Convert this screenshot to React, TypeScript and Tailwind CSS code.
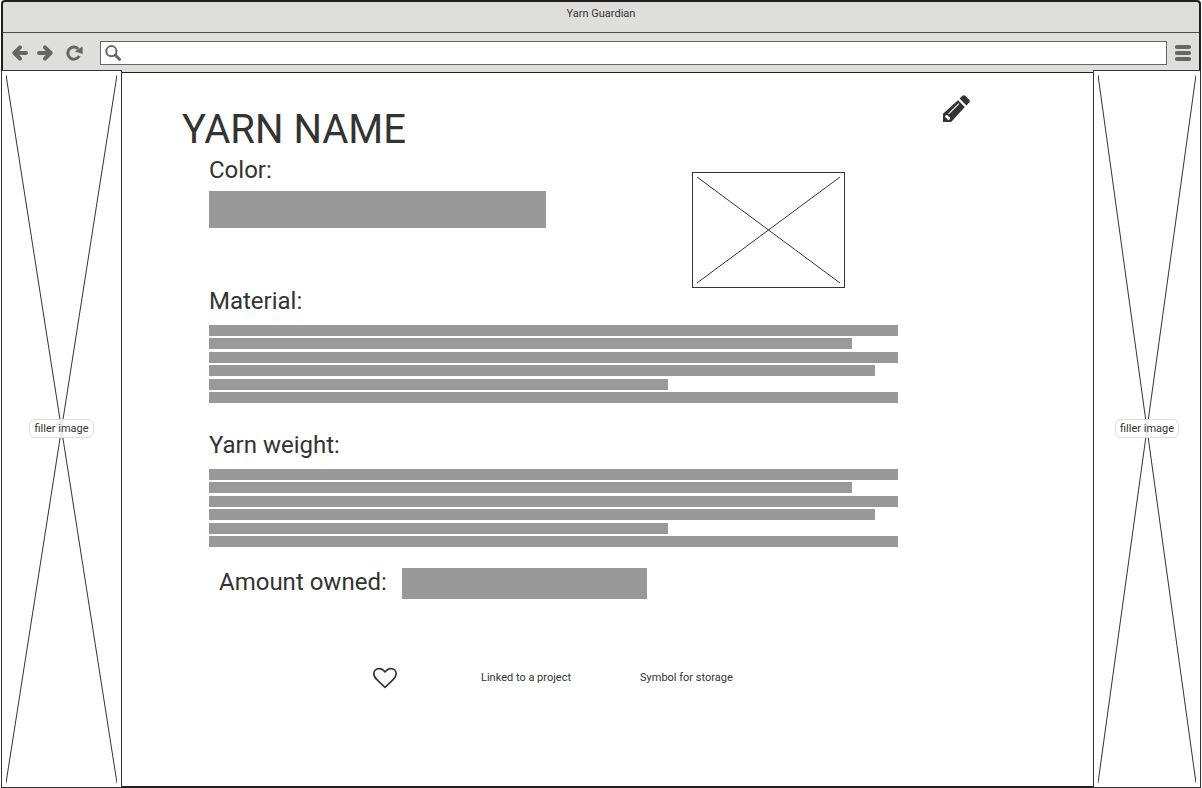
import React from "react";

function ArrowIcon({ flipped = false }: { flipped?: boolean }) {
  return (
    <svg
      viewBox="0 0 16 16"
      className={flipped ? "size-4 -scale-x-100" : "size-4"}
      fill="none"
      stroke="#666"
      strokeWidth="4"
      strokeLinecap="round"
      strokeLinejoin="round"
      aria-hidden="true"
    >
      <path d="M3 8H14M8 2.4L2.4 8L8 13.6" />
    </svg>
  );
}

function ReloadIcon() {
  return (
    <svg viewBox="0 0 17 16" className="h-4 w-[17px]" aria-hidden="true">
      <path
        d="M12.2 4A6 6 0 1 0 13.2 10.8"
        fill="none"
        stroke="#666"
        strokeWidth="3"
      />
      <path d="M16.6 1.4V9L8.8 6.4Z" fill="#666" />
    </svg>
  );
}

function SearchIcon() {
  return (
    <svg viewBox="0 0 16 16" className="size-4 shrink-0" fill="none" stroke="#666" aria-hidden="true">
      <circle cx="6.4" cy="6.2" r="5.1" strokeWidth="2" />
      <path d="M10.4 10.2L14.5 14.3" strokeWidth="3" strokeLinecap="round" />
    </svg>
  );
}

function MenuIcon() {
  return (
    <svg viewBox="0 0 16 16" className="size-4" fill="#666" aria-hidden="true">
      <rect y="0" width="16" height="4" rx="1.8" />
      <rect y="6" width="16" height="4" rx="1.8" />
      <rect y="12" width="16" height="4" rx="1.8" />
    </svg>
  );
}

function PencilIcon() {
  return (
    <svg viewBox="0 0 27 27" className="size-[27px]" fill="#333" aria-hidden="true">
      <path d="M16.6 3.6L19.4 .8Q20.8 -.4 22.2 .8L26.2 4.8Q27.5 6.2 26.3 7.6L23.4 10.4Z" />
      <path d="M15 5.2L21.8 12L8.2 27H0V18.8Z" />
      <path d="M5.9 18.6L15.6 8.9" stroke="#fff" strokeWidth="1.1" strokeLinecap="round" />
      <path d="M3 20.2Q5.2 19.6 5.4 21.6Q7.6 21.8 7 24.2L5.4 25.2L1.9 21.7Z" fill="#fff" />
    </svg>
  );
}

function HeartIcon() {
  return (
    <svg viewBox="0 0 1792 1792" className="size-6" fill="#333" aria-hidden="true">
      <path d="M1664 596q0-81-21.5-143t-55-98.5-81.5-59.5-94-31-98-8-112 25.5-110.5 64-86.5 72-60 61.5q-18 22-49 22t-49-22q-24-28-60-61.5t-86.5-72-110.5-64-112-25.5-98 8-94 31-81.5 59.5-55 98.5-21.5 143q0 168 187 355l581 560 580-559q188-188 188-356zm128 0q0 221-229 450l-623 600q-18 18-44 18t-44-18l-624-602q-10-8-27.5-26t-55.5-65.5-68-97.5-53.5-121-23.5-138q0-220 127-344t351-124q62 0 126.5 21.5t120 58 95.5 68.5 76 68q36-36 76-68t95.5-68.5 120-58 126.5-21.5q224 0 351 124t127 344z" />
    </svg>
  );
}

function ImagePlaceholder({ className, label }: { className: string; label?: string }) {
  return (
    <div className={`relative flex items-center justify-center border border-[#333] bg-white ${className}`}>
      <div className="absolute inset-1">
        <svg
          viewBox="0 0 100 100"
          preserveAspectRatio="none"
          className="size-full"
          stroke="#333"
          strokeWidth="1"
          aria-hidden="true"
        >
          <path d="M0 0L100 100M100 0L0 100" vectorEffect="non-scaling-stroke" />
        </svg>
      </div>
      {label && (
        <span className="relative rounded-md border border-[#ddd] bg-white/85 px-1 text-[11px] leading-[17px] whitespace-nowrap">
          {label}
        </span>
      )}
    </div>
  );
}

const lineWidths = ["w-full", "w-14/15", "w-full", "w-29/30", "w-2/3", "w-full"];

function TextLines() {
  return (
    <div className="mt-2 flex h-[78px] flex-col justify-between">
      {lineWidths.map((width, index) => (
        <div key={index} className={`h-[11px] bg-[#999] ${width}`} />
      ))}
    </div>
  );
}

export default function App() {
  return (
    <div className="flex min-h-screen flex-col bg-white px-px font-[Roboto,sans-serif] text-[#333]">
      <header className="rounded-t border-x-2 border-t-2 border-[#231f20] bg-[#dededc]">
        <div className="border-b border-[#4a4a4a] pt-0.5 pb-2 text-center text-[11px] leading-5">
          Yarn Guardian
        </div>
        <div className="flex h-[39px] items-center pr-2 pl-[5px]">
          <nav className="flex items-center gap-px" aria-label="Browser">
            <button type="button" aria-label="Back" className="px-1">
              <ArrowIcon />
            </button>
            <button type="button" aria-label="Forward" className="px-1">
              <ArrowIcon flipped />
            </button>
            <button type="button" aria-label="Reload" className="px-2">
              <ReloadIcon />
            </button>
          </nav>
          <label className="mr-2 ml-[9px] flex h-6 flex-1 items-center border border-[#666] bg-white px-1">
            <SearchIcon />
            <input
              type="text"
              aria-label="Address"
              className="min-w-0 flex-1 bg-transparent px-2 text-[11px] outline-none"
            />
          </label>
          <button type="button" aria-label="Menu">
            <MenuIcon />
          </button>
        </div>
      </header>

      <div className="flex flex-1">
        <aside className="-mt-0.5 flex w-[121px] shrink-0">
          <ImagePlaceholder className="flex-1 pb-px" label="filler image" />
        </aside>

        <main className="min-w-0 flex-1 border-t border-b-2 border-[#231f20] pt-5 pl-15">
          <div className="max-w-[791px]">
            <div className="flex items-start justify-between">
              <h1 className="pt-[13px] text-[40px] leading-[47px]">YARN NAME</h1>
              <button type="button" aria-label="Edit yarn" className="pt-0.5 pr-[3px]">
                <PencilIcon />
              </button>
            </div>

            <div className="max-w-[716px] pl-[27px]">
              <div className="flex justify-between pr-[53px]">
                <section className="pt-px">
                  <h2 className="text-2xl">Color:</h2>
                  <div className="mt-[5px] h-[37px] w-[337px] bg-[#999]" />
                </section>
                <ImagePlaceholder className="mt-[19px] h-[116px] w-[153px]" />
              </div>

              <section className="-mt-[3px]">
                <h2 className="text-2xl">Material:</h2>
                <TextLines />
              </section>

              <section className="mt-[26px]">
                <h2 className="text-2xl">Yarn weight:</h2>
                <TextLines />
              </section>

              <section className="mt-[21px] flex items-start gap-[15px] pl-2.5">
                <h2 className="text-2xl leading-7">Amount owned:</h2>
                <div className="h-[31px] w-[245px] bg-[#999]" />
              </section>
            </div>

            <div className="mt-[67px] mb-8 flex items-center pl-[191px] text-[11px]">
              <button type="button" aria-label="Add to favourites">
                <HeartIcon />
              </button>
              <span className="ml-[84px]">Linked to a project</span>
              <span className="ml-[69px]">Symbol for storage</span>
            </div>
          </div>
        </main>

        <aside className="-mt-0.5 flex w-[108px] shrink-0">
          <ImagePlaceholder className="flex-1 pb-px" label="filler image" />
        </aside>
      </div>
    </div>
  );
}
